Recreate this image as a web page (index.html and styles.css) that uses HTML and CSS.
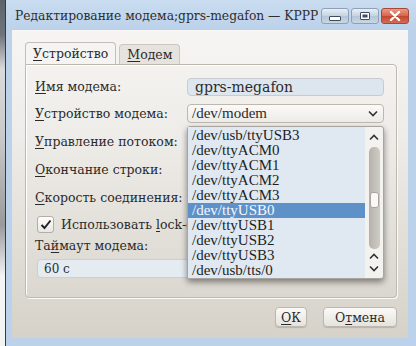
FILE: index.html
```html
<!DOCTYPE html>
<html lang="ru">
<head>
  <meta charset="UTF-8">
  <title>Редактирование модема;gprs-megafon — KPPP</title>
  <link rel="stylesheet" href="styles.css">
</head>
<body>

  <div class="desktop">
    <div class="desktop-edge"></div>

    <div class="window">
      <div class="titlebar">
        <span class="title">Редактирование модема;gprs-megafon — KPPP</span>
        <div class="win-buttons">
          <div class="win-btn"><span class="icon-min"></span></div>
          <div class="win-btn"><span class="icon-max"></span></div>
          <div class="win-btn close">
            <svg width="12" height="10" viewBox="0 0 12 10"><path d="M2 1 L10 9 M10 1 L2 9" stroke="#fff" stroke-width="2.4" stroke-linecap="round"/></svg>
          </div>
        </div>
      </div>

      <div class="client">
        <div class="tabs">
          <div class="tab active"><u>У</u>стройство</div>
          <div class="tab"><u>М</u>одем</div>
        </div>

        <div class="pane">
          <div class="form">
            <div class="label"><u>И</u>мя модема:</div>
            <div class="field"><div class="text-input">gprs-megafon</div></div>

            <div class="label"><u>У</u>стройство модема:</div>
            <div class="field">
              <div class="combo">
                <span>/dev/modem</span>
                <svg width="10" height="7" viewBox="0 0 10 7"><path d="M1 1.5 L5 5.5 L9 1.5" fill="none" stroke="#333" stroke-width="1.6"/></svg>
              </div>
            </div>

            <div class="label"><u>У</u>правление потоком:</div>
            <div class="field"></div>

            <div class="label"><u>О</u>кончание строки:</div>
            <div class="field"></div>

            <div class="label"><u>С</u>корость соединения:</div>
            <div class="field"></div>
          </div>

          <div class="check-row">
            <div class="checkbox">
              <svg width="12" height="11" viewBox="0 0 12 11"><path d="M1.5 6 L4.5 9 L10.5 1.5" fill="none" stroke="#222" stroke-width="2"/></svg>
            </div>
            <span class="check-text">Использовать <u>l</u>ock-файл</span>
          </div>

          <div class="timeout">
            <div class="label">Та<u>й</u>маут модема:</div>
            <div class="spin-input">60 с</div>
          </div>

          <!-- open list of the device combo -->
          <div class="popup">
            <div class="popup-list">
              <div class="item">/dev/usb/ttyUSB3</div>
              <div class="item">/dev/ttyACM0</div>
              <div class="item">/dev/ttyACM1</div>
              <div class="item">/dev/ttyACM2</div>
              <div class="item">/dev/ttyACM3</div>
              <div class="item selected">/dev/ttyUSB0</div>
              <div class="item">/dev/ttyUSB1</div>
              <div class="item">/dev/ttyUSB2</div>
              <div class="item">/dev/ttyUSB3</div>
              <div class="item">/dev/usb/tts/0</div>
            </div>
            <div class="scrollbar">
              <svg class="arrow" width="10" height="7" viewBox="0 0 10 7"><path d="M1 5.5 L5 1.5 L9 5.5" fill="none" stroke="#333" stroke-width="1.6"/></svg>
              <div class="track">
                <div class="handle"></div>
              </div>
              <svg class="arrow" width="10" height="7" viewBox="0 0 10 7"><path d="M1 5.5 L5 1.5 L9 5.5" fill="none" stroke="#333" stroke-width="1.6"/></svg>
              <svg class="arrow" width="10" height="7" viewBox="0 0 10 7"><path d="M1 1.5 L5 5.5 L9 1.5" fill="none" stroke="#333" stroke-width="1.6"/></svg>
            </div>
          </div>
        </div>

        <div class="buttons">
          <div class="button ok"><u>О</u>К</div>
          <div class="button cancel">О<u>т</u>мена</div>
        </div>
      </div>
    </div>
  </div>

</body>
</html>
```

FILE: styles.css
```css
body {
  margin: 0;
  width: 416px;
  height: 346px;
  overflow: hidden;
  font-family: "DejaVu Serif", serif;
  font-size: 12.5px;
  color: #2b2b2b;
}

u {
  text-decoration-thickness: 1px;
  text-underline-offset: 2px;
}

.desktop {
  display: flex;
  height: 346px;
}

.desktop-edge {
  flex: 0 0 5px;
  background: linear-gradient(#5d636b 0%, #6f747b 10%, #d9dadb 20%, #c9c9c9 40%, #9a9a9a 65%, #f4f4f4 80%, #f4f4f4 100%);
  border-right: 1px solid #3a3a3a;
}

.window {
  flex: 1;
  min-width: 0;
  display: flex;
  flex-direction: column;
  background: #bcd2ea;
  padding: 0 8px 8px 6px;
}

.titlebar {
  height: 30px;
  display: flex;
  align-items: center;
  justify-content: space-between;
  background: linear-gradient(#c9dcf0, #bcd2ea);
  margin: 0 -8px 0 -6px;
  padding: 0 7px 0 9px;
}

.title {
  font-size: 12.3px;
  color: #2e2e2e;
  white-space: nowrap;
  overflow: hidden;
  margin-top: 1px;
}

.win-buttons {
  display: flex;
  flex-shrink: 0;
  gap: 2px;
  margin-top: 2px;
}

.win-btn {
  width: 26px;
  height: 14px;
  border: 1px solid #8ea0b5;
  border-radius: 3px;
  background: linear-gradient(#e9eff6, #c4d2e1 50%, #b4c5d8 51%, #c9d6e4);
  display: flex;
  align-items: center;
  justify-content: center;
}

.win-btn.close {
  border-color: #a24a37;
  background: linear-gradient(#eb9a85, #d6634a 50%, #c4472e 51%, #d46b52);
}

.icon-min {
  width: 10px;
  height: 3px;
  border: 1px solid #3e4c5c;
  border-radius: 1px;
  margin-top: 5px;
  background: #fff;
}

.icon-max {
  width: 8px;
  height: 6px;
  border: 1px solid #3e4c5c;
  border-radius: 1px;
  background: #fff;
  box-shadow: inset 0 0 0 1.5px #fff, inset 0 0 0 3px #3e4c5c;
}

.client {
  flex: 1;
  display: flex;
  flex-direction: column;
  background: linear-gradient(#f6f5f3 0%, #eeece8 35%, #d6d2c9 100%);
  padding: 13px 11px 0 13px;
}

.tabs {
  display: flex;
  align-items: flex-end;
  gap: 3px;
  height: 21px;
  position: relative;
  z-index: 1;
}

.tab {
  padding: 0 7px;
  height: 19px;
  line-height: 19px;
  border: 1px solid #cbc7bf;
  border-bottom: none;
  border-radius: 4px 4px 0 0;
  background: #e6e3de;
}

.tab.active {
  height: 21px;
  line-height: 22px;
  background: #f5f4f2;
  border-color: #c3bfb7;
}

.pane {
  position: relative;
  height: 224px;
  border: 1px solid #bdb9b1;
  border-radius: 0 4px 4px 4px;
  box-shadow: inset 1px 1px 0 #fff, 1px 1px 0 #fbfaf8;
  padding: 8px 0 0 9px;
}

.form {
  display: grid;
  grid-template-columns: 152px 197px;
  grid-template-rows: 27px 27px 28px 28px 28px;
  align-items: center;
}

.label {
  white-space: nowrap;
}

.text-input {
  height: 16px;
  line-height: 17px;
  padding: 0 7px;
  border: 1px solid #c6ccd2;
  border-radius: 4px;
  background: #dde6ee;
  font-size: 14px;
}

.combo {
  height: 17px;
  display: flex;
  align-items: center;
  justify-content: space-between;
  padding: 0 5px 0 4px;
  border: 1px solid #bcb8b0;
  border-radius: 4px;
  background: linear-gradient(#fbfaf9, #ecebe8);
  font-family: "Liberation Serif", serif;
  font-size: 15px;
}

.check-row {
  height: 26px;
  display: flex;
  align-items: center;
  gap: 7px;
  padding-left: 2px;
  white-space: nowrap;
}

.check-text {
  width: 126px;
  overflow: hidden;
}

.checkbox {
  width: 15px;
  height: 15px;
  border: 1px solid #b3aea5;
  border-radius: 3px;
  background: linear-gradient(#fdfdfc, #e9e7e3);
  display: flex;
  align-items: center;
  justify-content: center;
}

.timeout {
  display: flex;
  flex-direction: column;
  gap: 4px;
}

.timeout .label {
  height: 18px;
  line-height: 18px;
}

.spin-input {
  width: 332px;
  height: 17px;
  line-height: 18px;
  margin-left: 2px;
  padding: 0 6px;
  border: 1px solid #c9cfd5;
  border-radius: 4px;
  background: #e4ebf1;
  font-size: 12px;
}

.popup {
  position: absolute;
  left: 161px;
  top: 61px;
  width: 195px;
  height: 151px;
  display: flex;
  border: 1px solid #a9a59e;
  border-radius: 3px;
  background: #f3f2ef;
  box-shadow: 0 3px 6px rgba(0, 0, 0, 0.45);
  z-index: 2;
}

.popup-list {
  flex: 1;
  background: #e0e9f1;
  padding-top: 1px;
  font-family: "Liberation Serif", serif;
  font-size: 15px;
  color: #1e1e1e;
}

.item {
  height: 15px;
  line-height: 15px;
  padding-left: 4px;
}

.item.selected {
  background: #5e91c8;
  color: #f4f8fc;
}

.scrollbar {
  width: 18px;
  display: flex;
  flex-direction: column;
  align-items: center;
  padding-top: 5px;
}

.arrow {
  margin: 2px 0 3px;
}

.track {
  width: 11px;
  height: 102px;
  border-radius: 5px;
  background: linear-gradient(90deg, #b6b2ab, #cfccc6);
  margin: 3px 0 2px;
  padding-top: 45px;
  box-sizing: border-box;
}

.handle {
  width: 9px;
  height: 16px;
  margin: 0 auto;
  border-radius: 3px;
  border: 1px solid #a8a49d;
  background: #faf9f7;
  box-sizing: border-box;
}

.buttons {
  display: flex;
  justify-content: flex-end;
  gap: 16px;
  padding: 9px 0 0;
}

.button {
  height: 18px;
  line-height: 19px;
  text-align: center;
  border: 1px solid #bdb8ae;
  border-radius: 4px;
  background: linear-gradient(#fbfaf8, #e6e3dd);
  box-shadow: 0 1px 1px rgba(0, 0, 0, 0.15);
}

.button.ok {
  width: 30px;
}

.button.cancel {
  width: 72px;
}
```
